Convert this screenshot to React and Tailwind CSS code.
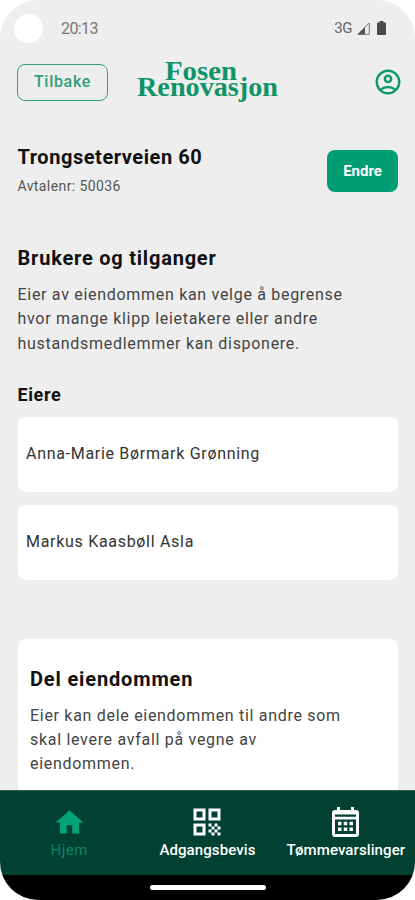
import { MdHome, MdOutlineAccountCircle, MdQrCode } from 'react-icons/md'

const owners = ['Anna-Marie Børmark Grønning', 'Markus Kaasbøll Asla']

function CalendarIcon() {
  return (
    <svg width="27" height="30" viewBox="0 0 27 30" fill="currentColor">
      <path d="M5 0h3v3h11V0h3v3h2a3 3 0 0 1 3 3v21a3 3 0 0 1-3 3H3a3 3 0 0 1-3-3V6a3 3 0 0 1 3-3h2z" />
      <path className="fill-[#004131]" d="M3 7.500h21v2.200H3zM3 12.500h21V27H3z" />
      <path d="M6 14.700h3.500v3.500H6zM11.750 14.700h3.500v3.500h-3.500zM17.500 14.700H21v3.500h-3.500zM6 20.500h3.500V24H6zM11.750 20.500h3.500V24h-3.500zM17.500 20.500H21V24h-3.500z" />
    </svg>
  )
}

const tabs = [
  { label: 'Hjem', icon: MdHome, size: 33, active: true },
  { label: 'Adgangsbevis', icon: MdQrCode, size: 36 },
  { label: 'Tømmevarslinger', icon: CalendarIcon },
]

function StatusBar() {
  return (
    <div className="flex h-14 shrink-0 items-center pr-[29px] pl-3.5 text-[#777]">
      <span className="size-[29px] rounded-full bg-white" />
      <span className="mt-px ml-[18px] text-base leading-5 tracking-[-0.6px]">20:13</span>
      <span className="ml-auto text-[15px] leading-5 tracking-[-0.4px] text-[#666]">3G</span>
      <svg className="ml-[5px]" width="13" height="13" viewBox="0 0 13 13">
        <path d="M12.3 1v11.3H1z" fill="none" stroke="#777" strokeWidth="1" />
        <path d="M8 5.2v7.3H.5z" fill="#555" />
      </svg>
      <svg className="ml-[7px]" width="9" height="14" viewBox="0 0 9 14">
        <path d="M2.5 0h4v1.5H8a1 1 0 0 1 1 1V13a1 1 0 0 1-1 1H1a1 1 0 0 1-1-1V2.500a1 1 0 0 1 1-1h1.500z" fill="#4a4a4a" />
      </svg>
    </div>
  )
}

function Logo() {
  return (
    <svg
      width="144"
      height="52"
      viewBox="0 -5 144 52"
      className="ml-[28px] overflow-visible fill-[#0f9467] font-['Liberation_Serif'] text-[26.5px] font-bold"
    >
      <text x="29" y="19.200" textLength="72" lengthAdjust="spacingAndGlyphs">Fosen</text>
      <text x="1" y="35" textLength="141" lengthAdjust="spacingAndGlyphs">Renovasjon</text>
    </svg>
  )
}

function Header() {
  return (
    <header className="flex h-[52px] shrink-0 items-center pr-3 pl-[17px]">
      <button className="h-[37px] w-[91px] rounded-lg border-[1.5px] border-[#35a27e] text-base font-medium tracking-[0.7px] text-[#2e9f7a]">
        Tilbake
      </button>
      <Logo />
      <MdOutlineAccountCircle size={30} className="ml-auto text-[#109a6c]" />
    </header>
  )
}

function TabBar() {
  return (
    <nav className="grid h-[85px] shrink-0 grid-cols-3 border-t border-[#2c5c4c] bg-[#004131]">
      {tabs.map(({ label, icon: Icon, size, active }) => (
        <div key={label} className={active ? 'flex flex-col items-center text-[#04a279]' : 'flex flex-col items-center text-white'}>
          <span className="mt-[13px] flex h-9 items-center">
            <Icon size={size} />
          </span>
          <span className={active ? 'text-[15px] leading-5 tracking-[0.5px] text-[#0a8365]' : 'text-[15px] leading-5 font-medium tracking-[0.1px] whitespace-nowrap'}>
            {label}
          </span>
        </div>
      ))}
    </nav>
  )
}

export default function App() {
  return (
    <div className="h-[900px] w-[415px] bg-white font-[Roboto,sans-serif] text-[#111]">
      <div className="flex h-full flex-col overflow-hidden rounded-[38px] bg-[#eee]">
        <StatusBar />
        <Header />

        <main className="min-h-0 flex-1 overflow-hidden pr-[17px] pl-[17.5px] pt-[37px]">
          <div className="flex items-start justify-between">
            <div>
              <h1 className="text-xl leading-6 font-bold tracking-[0.55px]">Trongseterveien 60</h1>
              <p className="mt-[7px] text-sm leading-5 tracking-[0.4px] text-[#555]">Avtalenr: 50036</p>
            </div>
            <button className="mt-[5px] h-[42px] w-[71px] rounded-lg bg-[#009c74] pt-px text-[15px] font-bold text-white">Endre</button>
          </div>

          <h2 className="mt-[50px] text-xl leading-6 font-bold tracking-[0.78px]">Brukere og tilganger</h2>
          <p className="mt-[13px] text-base leading-[24.3px] tracking-[0.7px] text-[#444]">
            Eier av eiendommen kan velge å begrense
            <br />
            hvor mange klipp leietakere eller andre
            <br />
            hustandsmedlemmer kan disponere.
          </p>

          <h3 className="mt-[27px] text-lg leading-6 font-bold tracking-[0.6px]">Eiere</h3>
          <ul className="mt-2.5 space-y-[13px]">
            {owners.map((name) => (
              <li key={name} className="flex h-[75px] items-center rounded-lg bg-white px-[8.5px] text-base tracking-[0.7px] text-[#333]">
                {name}
              </li>
            ))}
          </ul>

          <section className="mt-[59px] h-[200px] rounded-lg bg-white px-[12.5px] pt-7">
            <h2 className="text-xl leading-6 font-bold tracking-[0.85px]">Del eiendommen</h2>
            <p className="mt-[13px] text-base leading-[24.3px] tracking-[0.7px] text-[#444]">
              Eier kan dele eiendommen til andre som
              <br />
              skal levere avfall på vegne av
              <br />
              eiendommen.
            </p>
          </section>
        </main>

        <TabBar />
        <div className="flex h-[25px] shrink-0 justify-center bg-black pt-[10px]">
          <span className="h-[5px] w-[116px] rounded-full bg-white" />
        </div>
      </div>
    </div>
  )
}
